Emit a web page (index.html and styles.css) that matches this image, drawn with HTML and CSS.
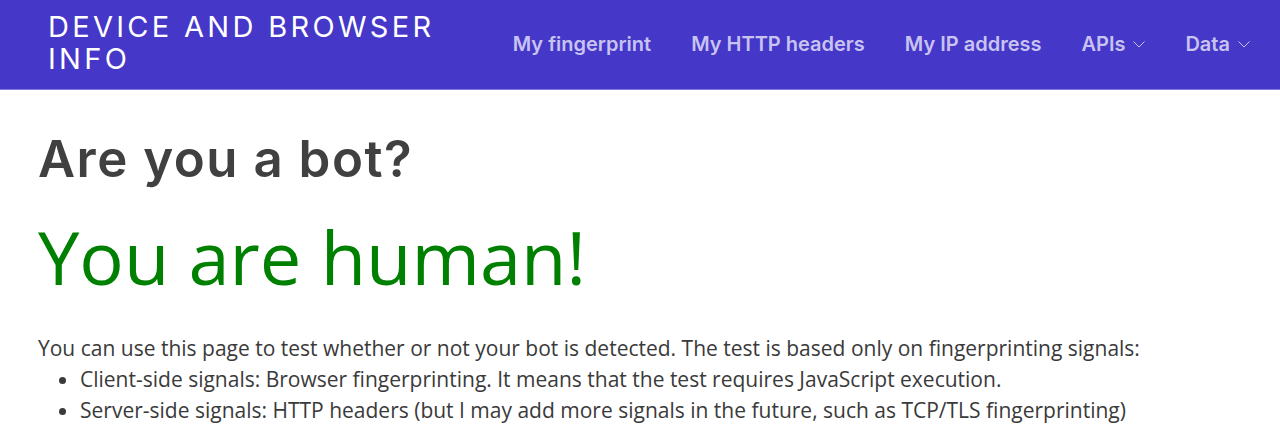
FILE: index.html
```html
<!DOCTYPE html>
<html lang="en">
<head>
<meta charset="utf-8">
<title>Are you a bot?</title>
<link rel="stylesheet" href="styles.css">
</head>
<body>
<header class="topbar">
  <div class="brand">DEVICE AND BROWSER<br>INFO</div>
  <nav class="nav">
    <a class="nav-item" href="#">My fingerprint</a>
    <a class="nav-item" href="#">My HTTP headers</a>
    <a class="nav-item" href="#">My IP address</a>
    <a class="nav-item" href="#">APIs <svg class="chev" viewBox="0 0 12 7" width="12" height="7"><polyline points="0.5,0.5 6,6 11.5,0.5" fill="none" stroke="currentColor" stroke-width="1"/></svg></a>
    <a class="nav-item" href="#">Data <svg class="chev" viewBox="0 0 12 7" width="12" height="7"><polyline points="0.5,0.5 6,6 11.5,0.5" fill="none" stroke="currentColor" stroke-width="1"/></svg></a>
  </nav>
</header>
<main class="content">
  <h1 class="title">Are you a bot?</h1>
  <h2 class="verdict">You are human!</h2>
  <p class="intro">You can use this page to test whether or not your bot is detected. The test is based only on fingerprinting signals:</p>
  <ul class="signals">
    <li>Client-side signals: Browser fingerprinting. It means that the test requires JavaScript execution.</li>
    <li>Server-side signals: HTTP headers (but I may add more signals in the future, such as TCP/TLS fingerprinting)</li>
  </ul>
</main>
</body>
</html>
```
FILE: styles.css
```css
html, body {
  margin: 0;
  padding: 0;
  background: #ffffff;
}
body {
  font-family: "Open Sans", "Liberation Sans", sans-serif;
  color: #3a3a3a;
}
.topbar {
  height: 89px;
  border-bottom: 1px solid #8177e0;
  background: #4537c8;
  display: flex;
  align-items: center;
  justify-content: space-between;
  padding: 0 30px 0 48px;
  box-sizing: content-box;
}
.brand {
  font-family: Inter, "DejaVu Sans", sans-serif;
  font-weight: 400;
  font-size: 29px;
  line-height: 32px;
  letter-spacing: 3.3px;
  color: #ffffff;
  margin-top: -4px;
}
.nav {
  display: flex;
  align-items: center;
  gap: 40px;
}
.nav-item {
  font-family: Inter, "DejaVu Sans", sans-serif;
  font-weight: 600;
  font-size: 20px;
  color: #c8c3f1;
  text-decoration: none;
  display: flex;
  align-items: center;
  gap: 8px;
  margin-top: -2px;
}
.chev {
  display: block;
  margin-top: 1px;
}
.content {
  padding: 0 38px;
}
.title {
  margin: 40px 0 0;
  font-family: Inter, "DejaVu Sans", sans-serif;
  font-weight: 600;
  font-size: 51px;
  line-height: 58px;
  letter-spacing: 1.5px;
  color: #404040;
}
.verdict {
  margin: 26px 0 0;
  font-family: "Open Sans", sans-serif;
  font-weight: 400;
  font-size: 74px;
  line-height: 86px;
  color: #008000;
}
.intro {
  margin: 33px 0 0;
  font-size: 21px;
  line-height: 31px;
}
.signals {
  margin: 0;
  padding-left: 42px;
  font-size: 21px;
  line-height: 31px;
}
```
